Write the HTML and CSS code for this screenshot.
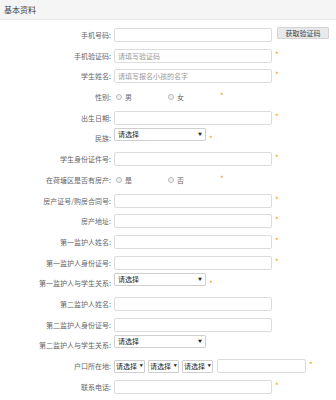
FILE: index.html
```html
<!DOCTYPE html>
<html lang="zh-CN">
<head>
    <meta charset="UTF-8">
    <meta name="viewport" content="width=device-width, initial-scale=1.0">
    <title>基本资料</title>
    <link rel="stylesheet" href="styles.css">
</head>
<body>
    <div class="panel-title">基本资料</div>

    <form class="info-form">
        <div class="row">
            <label class="row-label">手机号码:</label>
            <input type="text" class="text-input">
            <button type="button" class="code-btn">获取验证码</button>
        </div>

        <div class="row">
            <label class="row-label">手机验证码:</label>
            <input type="text" class="text-input" placeholder="请填写验证码">
            <span class="required">*</span>
        </div>

        <div class="row">
            <label class="row-label">学生姓名:</label>
            <input type="text" class="text-input" placeholder="请填写报名小孩的名字">
            <span class="required">*</span>
        </div>

        <div class="row">
            <label class="row-label">性别:</label>
            <div class="radio-group">
                <label class="radio-option"><input type="radio" name="sex" class="radio"> 男</label>
                <label class="radio-option"><input type="radio" name="sex" class="radio"> 女</label>
            </div>
            <span class="required">*</span>
        </div>

        <div class="row">
            <label class="row-label">出生日期:</label>
            <input type="text" class="text-input">
            <span class="required">*</span>
        </div>

        <div class="row row-select">
            <label class="row-label">民族:</label>
            <span class="select-wrap">
                <select class="select"><option>请选择</option></select>
            </span>
            <span class="required">*</span>
        </div>

        <div class="row">
            <label class="row-label">学生身份证件号:</label>
            <input type="text" class="text-input">
            <span class="required">*</span>
        </div>

        <div class="row">
            <label class="row-label">在荷塘区是否有房产:</label>
            <div class="radio-group">
                <label class="radio-option"><input type="radio" name="house" class="radio"> 是</label>
                <label class="radio-option"><input type="radio" name="house" class="radio"> 否</label>
            </div>
            <span class="required">*</span>
        </div>

        <div class="row">
            <label class="row-label">房产证号/购房合同号:</label>
            <input type="text" class="text-input">
            <span class="required">*</span>
        </div>

        <div class="row">
            <label class="row-label">房产地址:</label>
            <input type="text" class="text-input">
            <span class="required">*</span>
        </div>

        <div class="row">
            <label class="row-label">第一监护人姓名:</label>
            <input type="text" class="text-input">
            <span class="required">*</span>
        </div>

        <div class="row">
            <label class="row-label">第一监护人身份证号:</label>
            <input type="text" class="text-input">
            <span class="required">*</span>
        </div>

        <div class="row row-select">
            <label class="row-label">第一监护人与学生关系:</label>
            <span class="select-wrap">
                <select class="select"><option>请选择</option></select>
            </span>
            <span class="required">*</span>
        </div>

        <div class="row">
            <label class="row-label">第二监护人姓名:</label>
            <input type="text" class="text-input">
        </div>

        <div class="row">
            <label class="row-label">第二监护人身份证号:</label>
            <input type="text" class="text-input">
        </div>

        <div class="row row-select">
            <label class="row-label">第二监护人与学生关系:</label>
            <span class="select-wrap">
                <select class="select"><option>请选择</option></select>
            </span>
        </div>

        <div class="row">
            <label class="row-label">户口所在地:</label>
            <span class="select-wrap select-small">
                <select class="select"><option>请选择</option></select>
            </span>
            <span class="select-wrap select-small">
                <select class="select"><option>请选择</option></select>
            </span>
            <span class="select-wrap select-small">
                <select class="select"><option>请选择</option></select>
            </span>
            <input type="text" class="text-input address-input">
            <span class="required">*</span>
        </div>

        <div class="row">
            <label class="row-label">联系电话:</label>
            <input type="text" class="text-input">
            <span class="required">*</span>
        </div>
    </form>
</body>
</html>
```

FILE: styles.css
```css
body, html {
    margin: 0;
    padding: 0;
    background-color: #fff;
    font-family: 'Noto Sans CJK SC', 'Noto Sans', sans-serif;
    color: #666;
}

.panel-title {
    height: 19px;
    line-height: 19px;
    padding-left: 4px;
    font-size: 8px;
    color: #444;
    background-color: #f5f5f5;
    border-bottom: 1px solid #e8e8e8;
}

.info-form {
    padding-top: 8px;
}

.row {
    display: flex;
    align-items: center;
    height: 14px;
    margin-bottom: 6.7px;
    font-size: 7px;
}

.row-label {
    width: 114px;
    padding-right: 3px;
    box-sizing: border-box;
    text-align: right;
    white-space: nowrap;
}

.text-input {
    width: 158px;
    height: 14px;
    box-sizing: border-box;
    padding: 0 3px;
    border: 1px solid #dcdcdc;
    border-radius: 2px;
    font-family: inherit;
    font-size: 7px;
    color: #333;
    outline: none;
}

    .text-input::placeholder {
        color: #999;
    }

.address-input {
    width: 89px;
    margin-left: 1px;
}

.code-btn {
    align-self: flex-start;
    width: 52px;
    height: 12px;
    margin-top: -1px;
    margin-left: 5px;
    padding: 0;
    font-family: inherit;
    font-size: 7px;
    color: #444;
    background-color: #e9e9e9;
    border: 1px solid #d4d4d4;
    border-radius: 1px;
}

.required {
    margin-left: 3px;
    color: #f39c12;
    font-size: 8px;
    align-self: flex-start;
    line-height: 11px;
}

.radio-group {
    display: flex;
    padding-left: 2px;
}

.radio-group + .required {
    margin-left: 0;
}

.radio-option {
    display: flex;
    align-items: center;
    width: 52px;
}

.radio {
    appearance: none;
    width: 6px;
    height: 6px;
    margin: 0 3px 0 0;
    border: 1px solid #bbb;
    border-radius: 50%;
    background-color: #f2f2f2;
}

.select-wrap {
    position: relative;
    display: inline-block;
    width: 92px;
    height: 13px;
}

    .select-wrap::after {
        content: "▼";
        position: absolute;
        right: 4px;
        top: 3px;
        font-size: 4px;
        color: #222;
        pointer-events: none;
    }

.row-select .select-wrap {
    margin-bottom: 8px;
}

.row-select .required {
    align-self: center;
}

.select {
    appearance: none;
    width: 100%;
    height: 100%;
    box-sizing: border-box;
    padding: 0 3px;
    border: 1px solid #cfcfcf;
    border-radius: 1px;
    background-color: #fff;
    font-family: inherit;
    font-size: 7px;
    color: #222;
}

.select-small {
    width: 31px;
    margin-right: 3px;
}

    .select-small .select {
        padding: 0 1px;
    }

    .select-small::after {
        right: 2px;
        font-size: 3.5px;
    }
```
